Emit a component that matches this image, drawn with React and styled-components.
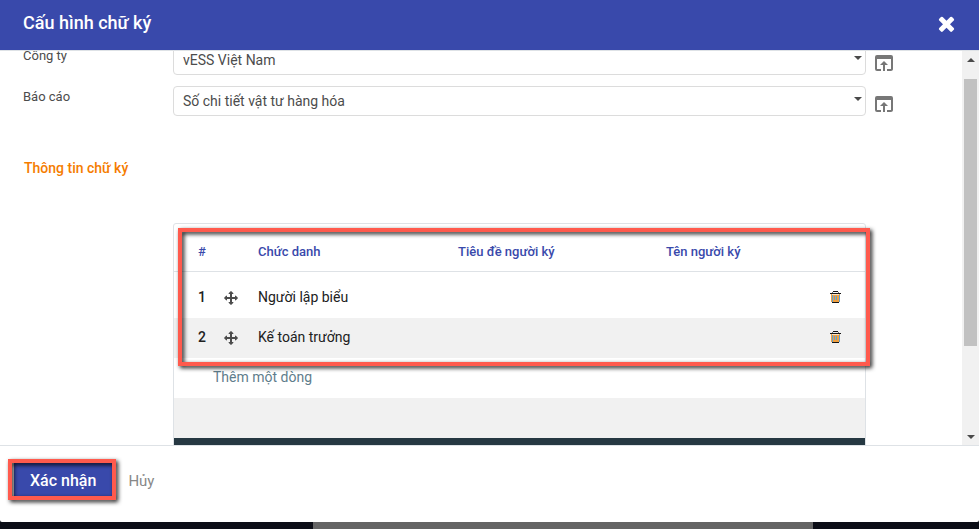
import React from "react";
import styled, { createGlobalStyle, css } from "styled-components";
import { MdOpenInBrowser } from "react-icons/md";

const GlobalStyle = createGlobalStyle`
  * { box-sizing: border-box; }
  body { margin: 0; background: #0b0d16; font-family: Roboto, "Noto Sans", sans-serif; font-size: 14px; color: #4c4c4c; }
  button, select { font-family: inherit; }
`;

const Page = styled.div`
  display: flex;
  flex-direction: column;
  height: 100vh;
`;

const Dialog = styled.section`
  display: flex;
  flex-direction: column;
  flex: 1;
  min-height: 0;
  background: #fff;
  border-radius: 0 0 2px 2px;
`;

const Header = styled.header`
  display: flex;
  align-items: center;
  justify-content: space-between;
  height: 51px;
  flex: none;
  padding: 0 21px 4px 23px;
  background: #3949ab;
  border-bottom: 1px solid #dee2e6;
`;

const Title = styled.h1`
  margin: 0;
  font-size: 18px;
  font-weight: 500;
  line-height: 24px;
  color: #fff;
`;

const IconButton = styled.button`
  display: inline-flex;
  align-items: center;
  justify-content: center;
  padding: 0;
  border: 0;
  background: none;
  color: ${(p) => p.$color || "#777"};
  cursor: pointer;
`;

const Body = styled.div`
  display: grid;
  grid-template-columns: minmax(0, 1fr) 17px;
  grid-template-rows: minmax(0, 1fr);
  flex: 1;
  min-height: 0;
`;

const Viewport = styled.main`
  overflow: hidden;
`;

const Sheet = styled.div`
  display: flex;
  flex-direction: column;
  margin-top: -6px;
  padding-left: 23px;
`;

const Field = styled.div`
  display: grid;
  grid-template-columns: 150px minmax(0, 1fr) 96px;
  height: 30px;
  margin-bottom: 11px;
`;

const Label = styled.label`
  font-size: 13px;
  line-height: 22px;
`;

const SelectBox = styled.div`
  display: grid;
  > * { grid-area: 1 / 1; }
  > svg { justify-self: end; margin: 11px 4px 0 0; pointer-events: none; }
`;

const Select = styled.select`
  width: 100%;
  height: 30px;
  padding: 0 24px 0 9px;
  appearance: none;
  border: 1px solid #dcdcdc;
  border-radius: 4px;
  background: #fff;
  font-size: 14px;
  color: #4c4c4c;
`;

const OpenButton = styled(IconButton)`
  align-self: end;
  justify-self: start;
  margin-left: 6px;
`;

const SectionTitle = styled.h2`
  margin: 30px 0 44px 1px;
  font-size: 14px;
  font-weight: 500;
  line-height: 22px;
  color: #f57c00;
`;

const Frame = styled.div`
  margin: 0 96px 0 150px;
  border: 1px solid #dee2e6;
  border-radius: 3px;
`;

const Marked = styled.div`
  position: relative;
`;

const markStyle = css`
  position: absolute;
  border: 4px solid #ff5a4d;
  filter: drop-shadow(2px 2px 2px rgba(0, 0, 0, 0.9));
  pointer-events: none;
`;

const TableMark = styled.div`
  ${markStyle}
  inset: 4px -5px -8px 4px;
`;

const ButtonMark = styled.div`
  ${markStyle}
  inset: -4px -4px -3px -6px;
`;

const Table = styled.table`
  width: 100%;
  table-layout: fixed;
  border-collapse: separate;
  border-spacing: 0;
`;

const Col = styled.col`
  width: ${(p) => p.$width};
`;

const HeadCell = styled.th`
  height: 48px;
  padding: 8px 8px 0;
  border-bottom: 1px solid #dee2e6;
  font-size: 13px;
  font-weight: 500;
  text-align: left;
  color: #3949ab;
  &:first-child { padding-left: 24px; }
`;

const Row = styled.tr`
  background: ${(p) => (p.$striped ? "#f1f1f1" : "#fff")};
`;

const Cell = styled.td`
  height: ${(p) => (p.$first ? 46 : 40)}px;
  padding: ${(p) => (p.$first ? 6 : 0)}px 8px 2px;
  color: #212121;
  font-weight: ${(p) => (p.$strong ? 500 : 400)};
  &:first-child { padding-left: 24px; }
  svg { display: inline-block; vertical-align: middle; }
`;

const RowAction = styled.div`
  display: flex;
  justify-content: flex-end;
  padding-right: 16px;
`;

const AddRow = styled.div`
  display: flex;
  align-items: center;
  height: 40px;
  padding: 0 0 2px 39px;
`;

const AddLink = styled.a`
  color: #5f7d8c;
  text-decoration: none;
`;

const EmptyRow = styled.div`
  height: 40px;
  background: #f1f1f1;
`;

const TableFoot = styled.div`
  height: 20px;
  background: #263842;
`;

const Scrollbar = styled.div`
  display: flex;
  flex-direction: column;
  align-items: center;
  justify-content: space-between;
  padding: 7px 2px 6px;
  background: #f1f1f1;
`;

const Thumb = styled.div`
  width: 13px;
  height: 267px;
  margin: 17px 0 auto;
  background: #c1c1c1;
`;

const Footer = styled.footer`
  display: flex;
  align-items: flex-start;
  gap: 16px;
  height: 77px;
  flex: none;
  padding: 17px 14px 0;
  border-top: 1px solid #dee2e6;
`;

const Button = styled.button`
  height: 34px;
  padding: ${(p) => (p.$primary ? "1px 16px 0" : "2px 0 0")};
  border: 0;
  background: ${(p) => (p.$primary ? "#3949ab" : "transparent")};
  color: ${(p) => (p.$primary ? "#fff" : "#888")};
  font-size: ${(p) => (p.$primary ? 16 : 15)}px;
  font-weight: ${(p) => (p.$primary ? 500 : 400)};
  cursor: pointer;
`;

const Backdrop = styled.div`
  display: grid;
  grid-template-columns: 32% 51% 17%;
  height: 7px;
  flex: none;
  background: #0b0d16;
`;

const BackdropPanel = styled.div`
  grid-column: 2;
  background: #646464;
`;

const CloseIcon = () => (
  <svg width="23" height="23" viewBox="0 0 1792 1792" fill="currentColor" aria-hidden="true">
    <path d="M1490 1322q0 40-28 68l-136 136q-28 28-68 28t-68-28l-294-294-294 294q-28 28-68 28t-68-28l-136-136q-28-28-28-68t28-68l294-294-294-294q-28-28-28-68t28-68l136-136q28-28 68-28t68 28l294 294 294-294q28-28 68-28t68 28l136 136q28 28 28 68t-28 68l-294 294 294 294q28 28 28 68z" />
  </svg>
);

const MoveIcon = () => (
  <svg width="14" height="14" viewBox="0 0 1792 1792" fill="#4c4c4c" aria-hidden="true">
    <path d="M1792 896q0 26-19 45l-256 256q-19 19-45 19t-45-19-19-45v-128h-384v384h128q26 0 45 19t19 45-19 45l-256 256q-19 19-45 19t-45-19l-256-256q-19-19-19-45t19-45 45-19h128v-384h-384v128q0 26-19 45t-45 19-45-19l-256-256q-19-19-19-45t19-45l256-256q19-19 45-19t45 19 19 45v128h384v-384h-128q-26 0-45-19t-19-45 19-45l256-256q19-19 45-19t45 19l256 256q19 19 19 45t-19 45-45 19h-128v384h384v-128q0-26 19-45t45-19 45 19l256 256q19 19 19 45z" />
  </svg>
);

const TrashIcon = () => (
  <svg width="11" height="12" viewBox="0 0 11 12" aria-hidden="true">
    <rect x="1" y="3" width="9" height="8" fill="#f0a040" />
    <rect x="2" y="3" width="7" height="1" fill="#fbe3c4" />
    <path fill="#5f9fd0" d="M2 4h1v7H2zM4 5h1v4H4zM6 5h1v4H6zM9 4h1v7H9z" />
    <path fill="#151515" d="M3 0h5v1H3zM0 2h11v1H0zM2 11h7v1H2z" />
    <path fill="#777" d="M2 1h1v1H2zM8 1h1v1H8z" />
  </svg>
);

const Caret = ({ up, width = 8 }) => (
  <svg width={width} height="4" viewBox="0 0 8 4" fill="#4a4a4a" aria-hidden="true">
    <path d={up ? "M0 4h8L4 0z" : "M0 0h8L4 4z"} />
  </svg>
);

const fields = [
  { id: "company", label: "Công ty", value: "vESS Việt Nam" },
  { id: "report", label: "Báo cáo", value: "Số chi tiết vật tư hàng hóa" },
];

const signers = ["Người lập biểu", "Kế toán trưởng"];

export default function App() {
  return (
    <>
      <GlobalStyle />
      <Page>
        <Dialog role="dialog" aria-labelledby="dialog-title">
          <Header>
            <Title id="dialog-title">Cấu hình chữ ký</Title>
            <IconButton $color="#fff" aria-label="Đóng"><CloseIcon /></IconButton>
          </Header>
          <Body>
            <Viewport>
              <Sheet>
                {fields.map((f) => (
                  <Field key={f.id}>
                    <Label htmlFor={f.id}>{f.label}</Label>
                    <SelectBox>
                      <Select id={f.id}><option>{f.value}</option></Select>
                      <Caret />
                    </SelectBox>
                    <OpenButton aria-label={`Mở ${f.label}`}><MdOpenInBrowser size={24} /></OpenButton>
                  </Field>
                ))}
                <SectionTitle>Thông tin chữ ký</SectionTitle>
                <Frame>
                  <Marked>
                    <Table>
                      <colgroup>
                        <Col $width="42px" />
                        <Col $width="34px" />
                        <Col $width="200px" />
                        <Col $width="208px" />
                        <Col />
                        <Col $width="60px" />
                      </colgroup>
                      <thead>
                        <tr>
                          <HeadCell>#</HeadCell>
                          <HeadCell />
                          <HeadCell>Chức danh</HeadCell>
                          <HeadCell>Tiêu đề người ký</HeadCell>
                          <HeadCell>Tên người ký</HeadCell>
                          <HeadCell />
                        </tr>
                      </thead>
                      <tbody>
                        {signers.map((name, i) => {
                          const first = i === 0;
                          return (
                            <Row key={name} $striped={i % 2 === 1}>
                              <Cell $first={first} $strong>{i + 1}</Cell>
                              <Cell $first={first}><MoveIcon /></Cell>
                              <Cell $first={first}>{name}</Cell>
                              <Cell $first={first} />
                              <Cell $first={first} />
                              <Cell $first={first}>
                                <RowAction>
                                  <IconButton aria-label={`Xóa ${name}`}><TrashIcon /></IconButton>
                                </RowAction>
                              </Cell>
                            </Row>
                          );
                        })}
                      </tbody>
                    </Table>
                    <TableMark />
                  </Marked>
                  <AddRow><AddLink href="#">Thêm một dòng</AddLink></AddRow>
                  <EmptyRow />
                  <TableFoot />
                </Frame>
              </Sheet>
            </Viewport>
            <Scrollbar aria-hidden="true">
              <Caret up />
              <Thumb />
              <Caret />
            </Scrollbar>
          </Body>
          <Footer>
            <Marked>
              <Button $primary>Xác nhận</Button>
              <ButtonMark />
            </Marked>
            <Button>Hủy</Button>
          </Footer>
        </Dialog>
        <Backdrop><BackdropPanel /></Backdrop>
      </Page>
    </>
  );
}
